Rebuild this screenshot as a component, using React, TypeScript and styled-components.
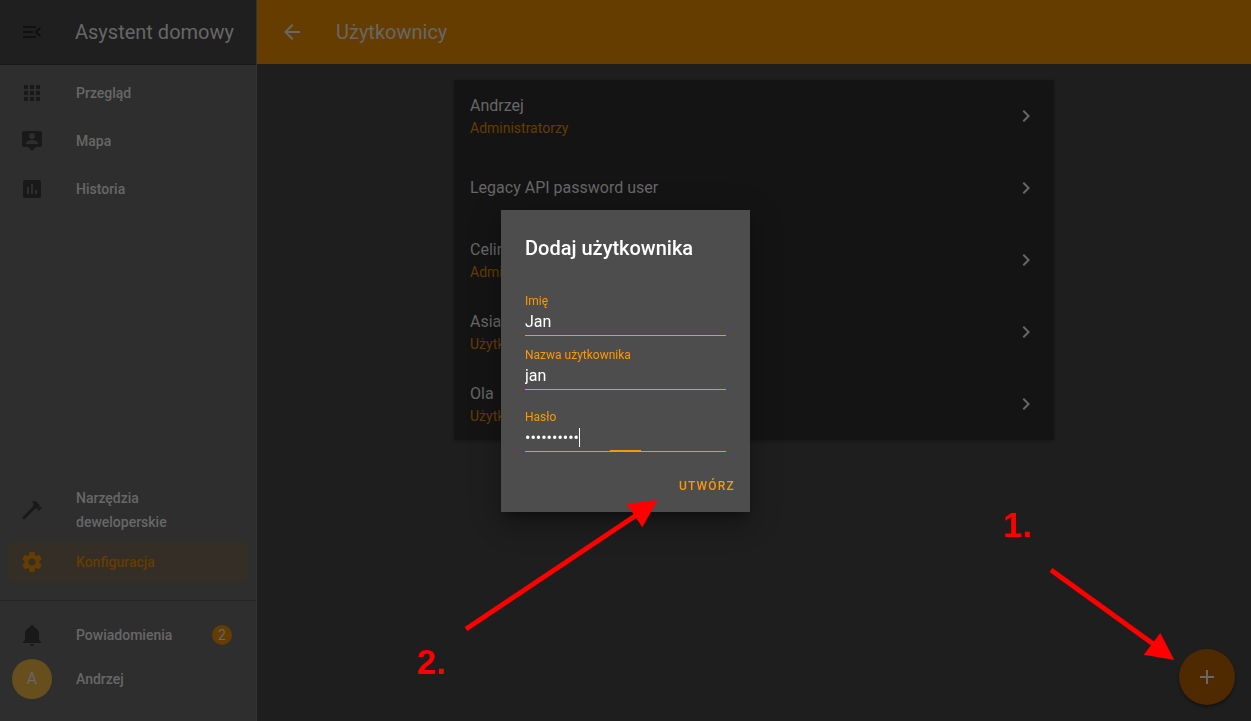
import React from "react";
import styled, { createGlobalStyle } from "styled-components";

const GlobalStyle = createGlobalStyle`
  *, *::before, *::after { box-sizing: border-box; }
  html, body, #root { height: 100%; }
  body {
    margin: 0;
    background: #1e1e1e;
    color: #676767;
    font-family: Roboto, "Noto Sans", sans-serif;
    font-size: 14px;
  }
  button, input { font: inherit; color: inherit; border: 0; padding: 0; background: none; outline: none; }
  a { color: inherit; text-decoration: none; }
  h1, h2, p, ul { margin: 0; padding: 0; font-weight: 400; }
`;

const paths = {
  menuOpen:
    "M21,15.61L19.59,17L14.58,12L19.59,7L21,8.39L17.44,12L21,15.61M3,6H16V8H3V6M3,13V11H13V13H3M3,18V16H16V18H3Z",
  apps: "M16,20H20V16H16M16,14H20V10H16M10,8H14V4H10M16,8H20V4H16M10,14H14V10H10M4,14H8V10H4M4,20H8V16H4M10,20H14V16H10M4,8H8V4H4V8Z",
  map: "M4,2H20A2,2 0 0,1 22,4V16A2,2 0 0,1 20,18H16L12,22L8,18H4A2,2 0 0,1 2,16V4A2,2 0 0,1 4,2M12,4A3,3 0 0,0 9,7A3,3 0 0,0 12,10A3,3 0 0,0 15,7A3,3 0 0,0 12,4M18,15V14.1C18,12.1 14,11 12,11C10,11 6,12.1 6,14.1V15H18Z",
  history:
    "M17,17H15V13H17M13,17H11V7H13M9,17H7V10H9M19,3H5A2,2 0 0,0 3,5V19A2,2 0 0,0 5,21H19A2,2 0 0,0 21,19V5A2,2 0 0,0 19,3Z",
  hammer:
    "M2,19.63L13.43,8.2L12.72,7.5L14.14,6.07L12,3.89C13.2,2.7 15.09,2.7 16.27,3.89L19.87,7.5L18.45,8.91H21.29L22,9.62L18.45,13.21L17.74,12.5V9.62L16.27,11.04L15.56,10.33L4.13,21.76L2,19.63Z",
  cog: "M12,15.5A3.5,3.5 0 0,1 8.5,12A3.5,3.5 0 0,1 12,8.5A3.5,3.5 0 0,1 15.5,12A3.5,3.5 0 0,1 12,15.5M19.43,12.97C19.47,12.65 19.5,12.33 19.5,12C19.5,11.67 19.47,11.34 19.43,11L21.54,9.37C21.73,9.22 21.78,8.95 21.66,8.73L19.66,5.27C19.54,5.05 19.27,4.96 19.05,5.05L16.56,6.05C16.04,5.66 15.5,5.32 14.87,5.07L14.5,2.42C14.46,2.18 14.25,2 14,2H10C9.75,2 9.54,2.18 9.5,2.42L9.13,5.07C8.5,5.32 7.96,5.66 7.44,6.05L4.95,5.05C4.73,4.96 4.46,5.05 4.34,5.27L2.34,8.73C2.21,8.95 2.27,9.22 2.46,9.37L4.57,11C4.53,11.34 4.5,11.67 4.5,12C4.5,12.33 4.53,12.65 4.57,12.97L2.46,14.63C2.27,14.78 2.21,15.05 2.34,15.27L4.34,18.73C4.46,18.95 4.73,19.03 4.95,18.95L7.44,17.94C7.96,18.34 8.5,18.68 9.13,18.93L9.5,21.58C9.54,21.82 9.75,22 10,22H14C14.25,22 14.46,21.82 14.5,21.58L14.87,18.93C15.5,18.67 16.04,18.34 16.56,17.94L19.05,18.95C19.27,19.03 19.54,18.95 19.66,18.73L21.66,15.27C21.78,15.05 21.73,14.78 21.54,14.63L19.43,12.97Z",
  bell: "M21,19V20H3V19L5,17V11C5,7.9 7.03,5.17 10,4.29C10,4.19 10,4.1 10,4A2,2 0 0,1 12,2A2,2 0 0,1 14,4C14,4.1 14,4.19 14,4.29C16.97,5.17 19,7.9 19,11V17L21,19M14,21A2,2 0 0,1 12,23A2,2 0 0,1 10,21",
  back: "M20,11H7.83L13.42,5.41L12,4L4,12L12,20L13.41,18.59L7.83,13H20V11Z",
  chevron: "M8.59,16.58L13.17,12L8.59,7.41L10,6L16,12L10,18L8.59,16.58Z",
  plus: "M19,13H13V19H11V13H5V11H11V5H13V11H19V13Z",
};

const IconSvg = styled.svg`
  display: block;
  flex: none;
  width: 24px;
  height: 24px;
  fill: currentColor;
`;

const Icon = ({ name }: { name: keyof typeof paths }) => (
  <IconSvg viewBox="0 0 24 24" aria-hidden="true">
    <path d={paths[name]} />
  </IconSvg>
);

const Page = styled.div`
  display: flex;
  min-height: 100%;
`;

const Sidebar = styled.aside`
  flex: none;
  display: flex;
  flex-direction: column;
  width: 257px;
  background: #2e2e2e;
  border-right: 1px solid #333333;
`;

const SidebarHeader = styled.header`
  display: flex;
  align-items: center;
  gap: 31px;
  height: 65px;
  padding: 0 20px 1px;
  background: #1f1f1f;
  border-bottom: 1px solid #191919;
`;

const IconButton = styled.button<{ $color: string }>`
  color: ${(p) => p.$color};
`;

const BarTitle = styled.h1`
  font-size: 20px;
  line-height: 24px;
  white-space: nowrap;
`;

const Nav = styled.nav`
  flex: 1;
  display: flex;
  flex-direction: column;
  gap: 8px;
  padding: 8px 8px 18px;
`;

const Spacer = styled.div`
  flex: 1;
`;

const NavItem = styled.a<{ $active?: boolean }>`
  display: flex;
  align-items: center;
  gap: 32px;
  min-height: 40px;
  padding: 0 12px;
  border-radius: 4px;
  background: ${(p) => (p.$active ? "#342e26" : "transparent")};
  color: ${(p) => (p.$active ? "#663d00" : "#676767")};
  font-weight: 500;
  line-height: 24px;

  svg {
    color: ${(p) => (p.$active ? "#663d00" : "#191919")};
  }
`;

const NavLabel = styled.span`
  flex: 1;
  max-width: 136px;
`;

const SidebarFooter = styled.div`
  display: flex;
  flex-direction: column;
  gap: 4px;
  padding: 14px 8px 22px;
  border-top: 1px solid #242424;
`;

const Badge = styled.span`
  flex: none;
  width: 20px;
  height: 20px;
  margin: 0 4px 0 -32px;
  border-radius: 50%;
  background: #663d00;
  font-weight: 400;
  line-height: 20px;
  text-align: center;
`;

const Avatar = styled.span`
  flex: none;
  width: 40px;
  height: 40px;
  margin: 0 -8px;
  border-radius: 50%;
  background: #664f1c;
  font-size: 16px;
  font-weight: 400;
  line-height: 40px;
  text-align: center;
`;

const Main = styled.main`
  flex: 1;
  min-width: 0;
`;

const Toolbar = styled.header`
  display: flex;
  align-items: center;
  gap: 32px;
  height: 64px;
  padding: 0 23px;
  background: #663d00;
`;

const UserCard = styled.ul`
  max-width: 600px;
  margin: 16px auto;
  border-radius: 2px;
  background: #141414;
  list-style: none;
  box-shadow: 0 1px 3px rgba(0, 0, 0, 0.3);
`;

const UserRow = styled.a`
  display: flex;
  align-items: center;
  justify-content: space-between;
  height: 72px;
  padding: 0 16px;
`;

const UserName = styled.p`
  font-size: 16px;
  line-height: 24px;
`;

const UserGroup = styled.p`
  color: #663d00;
  line-height: 20px;
`;

const Fab = styled.button`
  position: fixed;
  right: 16px;
  bottom: 16px;
  display: flex;
  align-items: center;
  justify-content: center;
  width: 56px;
  height: 56px;
  border-radius: 50%;
  background: #4f2a00;
  box-shadow: 0 2px 3px rgba(0, 0, 0, 0.4);
`;

const Overlay = styled.div`
  position: fixed;
  inset: 0;
  display: flex;
  align-items: center;
  justify-content: center;
`;

const Dialog = styled.form`
  position: relative;
  width: 249px;
  padding: 24px 24px 13px;
  background: #4d4d4d;
  color: #ffffff;
  box-shadow: 0 16px 24px 2px rgba(0, 0, 0, 0.14), 0 6px 30px 5px rgba(0, 0, 0, 0.12),
    0 8px 10px -5px rgba(0, 0, 0, 0.4);
`;

const DialogTitle = styled.h2`
  margin-bottom: 29px;
  font-size: 20px;
  font-weight: 500;
  line-height: 28px;
`;

const Field = styled.div<{ $spaced?: boolean }>`
  position: relative;
  margin-top: ${(p) => (p.$spaced ? "17px" : "9px")};
  border-bottom: 1px solid #ff9800;
`;

const FieldLabel = styled.label`
  display: block;
  color: #ff9800;
  font-size: 12px;
  line-height: 20px;
`;

const FieldInput = styled.input`
  display: block;
  width: 100%;
  height: 24px;
  padding-bottom: 2px;
  font-size: 16px;
`;

const Caret = styled.span`
  position: absolute;
  left: 54px;
  bottom: 4px;
  width: 1px;
  height: 19px;
  background: #ffffff;
`;

const FocusLine = styled.span`
  position: absolute;
  left: 85px;
  bottom: -1px;
  width: 31px;
  height: 2px;
  background: #ff9800;
`;

const DialogActions = styled.div`
  display: flex;
  justify-content: flex-end;
  margin: 21px -9px 0 0;
`;

const TextButton = styled.button`
  color: #ff9800;
  font-size: 12px;
  font-weight: 500;
  line-height: 26px;
  letter-spacing: 0.1em;
  text-transform: uppercase;
`;

const Annotation = styled.svg`
  overflow: visible;
  pointer-events: none;
  fill: #ff0000;
  stroke: none;
  font: bold 35px "Liberation Sans", sans-serif;

  line {
    stroke: #ff0000;
    stroke-width: 5px;
  }
`;

const CreateHint = styled(Annotation)`
  position: absolute;
  left: -91px;
  top: 280px;
`;

const FabHint = styled(Annotation)`
  position: fixed;
  right: 70px;
  bottom: 51px;
`;

const users = [
  { name: "Andrzej", group: "Administratorzy" },
  { name: "Legacy API password user", group: "" },
  { name: "Celina", group: "Administratorzy" },
  { name: "Asia", group: "Użytkownicy" },
  { name: "Ola", group: "Użytkownicy" },
];

export default function App() {
  return (
    <>
      <GlobalStyle />
      <Page>
        <Sidebar>
          <SidebarHeader>
            <IconButton type="button" $color="#101010" aria-label="Menu">
              <Icon name="menuOpen" />
            </IconButton>
            <BarTitle as="span">Asystent domowy</BarTitle>
          </SidebarHeader>
          <Nav>
            <NavItem href="#przeglad">
              <Icon name="apps" />
              <NavLabel>Przegląd</NavLabel>
            </NavItem>
            <NavItem href="#mapa">
              <Icon name="map" />
              <NavLabel>Mapa</NavLabel>
            </NavItem>
            <NavItem href="#historia">
              <Icon name="history" />
              <NavLabel>Historia</NavLabel>
            </NavItem>
            <Spacer />
            <NavItem href="#narzedzia">
              <Icon name="hammer" />
              <NavLabel>Narzędzia deweloperskie</NavLabel>
            </NavItem>
            <NavItem href="#konfiguracja" $active>
              <Icon name="cog" />
              <NavLabel>Konfiguracja</NavLabel>
            </NavItem>
          </Nav>
          <SidebarFooter>
            <NavItem href="#powiadomienia">
              <Icon name="bell" />
              <NavLabel>Powiadomienia</NavLabel>
              <Badge>2</Badge>
            </NavItem>
            <NavItem href="#profil">
              <Avatar>A</Avatar>
              <NavLabel>Andrzej</NavLabel>
            </NavItem>
          </SidebarFooter>
        </Sidebar>
        <Main>
          <Toolbar>
            <IconButton type="button" $color="#676767" aria-label="Wstecz">
              <Icon name="back" />
            </IconButton>
            <BarTitle>Użytkownicy</BarTitle>
          </Toolbar>
          <UserCard>
            {users.map((user) => (
              <li key={user.name}>
                <UserRow href="#uzytkownik">
                  <div>
                    <UserName>{user.name}</UserName>
                    {user.group && <UserGroup>{user.group}</UserGroup>}
                  </div>
                  <Icon name="chevron" />
                </UserRow>
              </li>
            ))}
          </UserCard>
        </Main>
      </Page>
      <Fab type="button" aria-label="Dodaj">
        <Icon name="plus" />
      </Fab>
      <Overlay>
        <Dialog role="dialog" aria-labelledby="dialog-title" onSubmit={(e) => e.preventDefault()}>
          <DialogTitle id="dialog-title">Dodaj użytkownika</DialogTitle>
          <Field>
            <FieldLabel htmlFor="name">Imię</FieldLabel>
            <FieldInput id="name" defaultValue="Jan" />
          </Field>
          <Field>
            <FieldLabel htmlFor="username">Nazwa użytkownika</FieldLabel>
            <FieldInput id="username" defaultValue="jan" />
          </Field>
          <Field $spaced>
            <FieldLabel htmlFor="password">Hasło</FieldLabel>
            <FieldInput id="password" type="password" defaultValue="haslo12345" />
            <Caret />
            <FocusLine />
          </Field>
          <DialogActions>
            <TextButton type="submit">Utwórz</TextButton>
          </DialogActions>
          <CreateHint width="260" height="200" viewBox="0 0 260 200">
            <line x1="56" y1="139" x2="228" y2="24" />
            <polygon points="247.7,10 216.7,14 232.3,37.3" />
            <text x="7" y="184">2.</text>
          </CreateHint>
        </Dialog>
      </Overlay>
      <FabHint width="180" height="170" viewBox="0 0 180 170">
        <line x1="50" y1="70" x2="155" y2="146" />
        <polygon points="173.3,160 159.3,133 142.7,154.7" />
        <text x="2" y="37">1.</text>
      </FabHint>
    </>
  );
}
